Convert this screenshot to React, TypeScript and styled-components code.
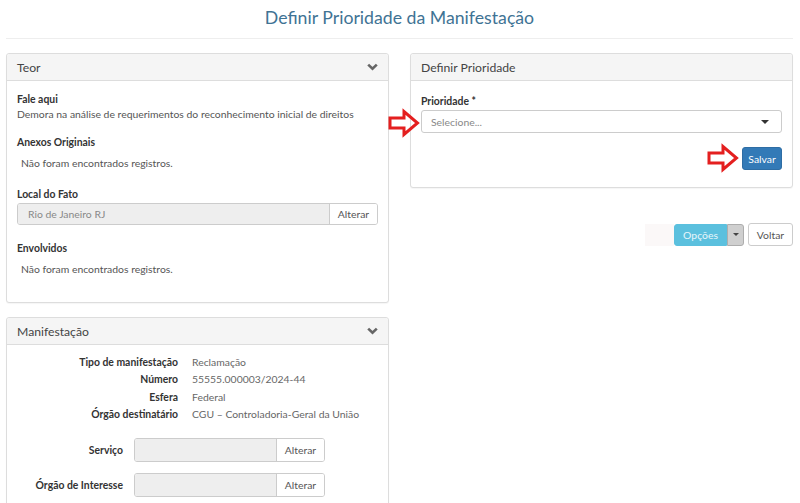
import React from "react";
import styled, { createGlobalStyle } from "styled-components";

const GlobalStyle = createGlobalStyle`
  body {
    margin: 0;
    background: #ffffff;
    font-family: Lato, "Open Sans", "Liberation Sans", sans-serif;
    font-size: 10.4px;
    color: #555;
  }
`;

const Page = styled.div`
  width: 800px;
  height: 503px;
  overflow: hidden;
  padding: 0 7px 0 6px;
  box-sizing: border-box;
`;

const TitleBar = styled.div`
  height: 39px;
  border-bottom: 1px solid #eeeeee;
  display: flex;
  align-items: center;
  justify-content: center;
  padding-bottom: 4px;
  box-sizing: border-box;
`;

const Title = styled.h1`
  margin: 0;
  font-size: 17.7px;
  font-weight: 400;
  color: #3f7394;
`;

const Columns = styled.div`
  display: grid;
  grid-template-columns: 383px 383px;
  column-gap: 21px;
  margin-top: 14px;
  align-items: start;
`;

const Column = styled.div`
  display: flex;
  flex-direction: column;
  gap: 14px;
`;

const Panel = styled.section`
  border: 1px solid #dddddd;
  border-radius: 3px;
  background: #fff;
  box-shadow: 0 1px 1px rgba(0, 0, 0, 0.04);
`;

const PanelHeader = styled.header`
  height: 26px;
  background: #f5f5f5;
  border-bottom: 1px solid #dddddd;
  border-radius: 3px 3px 0 0;
  display: flex;
  align-items: center;
  justify-content: space-between;
  padding: 0 10px;
  font-size: 12.2px;
  color: #444;
`;

const PanelBody = styled.div<{ $pad?: string }>`
  padding: ${(p) => p.$pad || "10px"};
  position: relative;
`;

const Label = styled.div<{ $mt?: number }>`
  font-weight: 700;
  color: #333;
  line-height: 15px;
  margin-top: ${(p) => p.$mt || 0}px;
`;

const Text = styled.div`
  line-height: 15px;
  color: #555;
`;

const Empty = styled.div<{ $mt?: number }>`
  padding-left: 4px;
  line-height: 15px;
  margin-top: ${(p) => p.$mt || 0}px;
`;

const InputGroup = styled.div<{ $w?: number; $h?: number; $mt?: number }>`
  display: flex;
  width: ${(p) => (p.$w ? `${p.$w}px` : "100%")};
  height: ${(p) => p.$h || 22}px;
  margin-top: ${(p) => p.$mt || 0}px;
  border: 1px solid #cccccc;
  border-radius: 3px;
  box-sizing: border-box;
  overflow: hidden;
`;

const ReadOnlyInput = styled.div`
  flex: 1;
  background: #eeeeee;
  color: #888;
  display: flex;
  align-items: center;
  padding: 0 10px;
`;

const Addon = styled.div`
  width: 47px;
  background: #fff;
  border-left: 1px solid #cccccc;
  display: flex;
  align-items: center;
  justify-content: center;
  color: #555;
`;

const Chevron = () => (
  <svg width="11" height="8" viewBox="0 0 11 8">
    <path d="M1.2 1.6 L5.5 5.8 L9.8 1.6" fill="none" stroke="#666" strokeWidth="2.6" />
  </svg>
);

const DefList = styled.div`
  display: grid;
  grid-template-columns: 161px 1fr;
  column-gap: 14px;
  row-gap: 2.2px;
  line-height: 15.3px;
`;

const DefTerm = styled.div`
  text-align: right;
  font-weight: 700;
  color: #333;
`;

const DefValue = styled.div`
  color: #666;
`;

const FormRow = styled.div<{ $mt?: number }>`
  display: grid;
  grid-template-columns: 106px 191px;
  column-gap: 11px;
  align-items: center;
  margin-top: ${(p) => p.$mt || 0}px;
`;

const FormLabel = styled.div`
  text-align: right;
  font-weight: 700;
  color: #333;
`;

const Select = styled.div`
  height: 23px;
  margin-top: 1px;
  border: 1px solid #cccccc;
  border-radius: 3px;
  box-sizing: border-box;
  display: flex;
  align-items: center;
  justify-content: space-between;
  padding: 0 12px 0 9px;
  color: #888;
`;

const Caret = styled.span<{ $color?: string; $size?: number }>`
  width: 0;
  height: 0;
  border-left: ${(p) => p.$size || 4}px solid transparent;
  border-right: ${(p) => p.$size || 4}px solid transparent;
  border-top: ${(p) => p.$size || 4}px solid ${(p) => p.$color || "#333"};
`;

const Actions = styled.div`
  display: flex;
  justify-content: flex-end;
  margin-top: 14px;
`;

const Button = styled.button<{ $variant: "primary" | "info" | "caret" | "default" | "ghost" }>`
  font-family: inherit;
  font-size: 10.4px;
  height: 22px;
  padding: 0 8px;
  border-radius: ${(p) => (p.$variant === "info" ? "3px 0 0 3px" : p.$variant === "caret" ? "0 3px 3px 0" : "3px")};
  border: 1px solid
    ${(p) =>
      p.$variant === "primary"
        ? "#2e6da4"
        : p.$variant === "info"
        ? "#5bc0de"
        : p.$variant === "caret"
        ? "#adadad"
        : p.$variant === "ghost"
        ? "transparent"
        : "#cccccc"};
  background: ${(p) =>
    p.$variant === "primary"
      ? "#337ab7"
      : p.$variant === "info"
      ? "#5bc0de"
      : p.$variant === "caret"
      ? "#cfcfcf"
      : p.$variant === "ghost"
      ? "#fbf8f8"
      : "#fff"};
  color: ${(p) => (p.$variant === "default" ? "#555" : p.$variant === "info" ? "#e8f6fb" : "#fff")};
  display: flex;
  align-items: center;
  justify-content: center;
  ${(p) => p.$variant === "primary" && "height: 23px; width: 40px; padding: 0;"}
  ${(p) => p.$variant === "info" && "width: 53px;"}
  ${(p) => p.$variant === "caret" && "width: 17px; padding: 0;"}
  ${(p) => p.$variant === "ghost" && "width: 29px; border-radius: 0;"}
  ${(p) => p.$variant === "default" && "width: 45px; height: 23px; margin-left: 4px;"}
`;

const Toolbar = styled.div`
  display: flex;
  justify-content: flex-end;
  align-items: center;
  margin-top: 21px;
`;

const FieldWrap = styled.div`
  position: relative;
`;

const Pointer = styled.svg<{ $left: number; $top: number }>`
  position: absolute;
  left: ${(p) => p.$left}px;
  top: ${(p) => p.$top}px;
  overflow: visible;
`;

const RedArrow = ({ left, top }: { left: number; top: number }) => (
  <Pointer $left={left} $top={top} width="32" height="28" viewBox="0 0 32 28">
    <path
      d="M2 9 H16 V2.5 L29.5 14 L16 25.5 V19 H2 Z"
      fill="none"
      stroke="#e41f1f"
      strokeWidth="3"
      strokeLinejoin="miter"
    />
  </Pointer>
);

export default function App() {
  return (
    <Page>
      <GlobalStyle />
      <TitleBar>
        <Title>Definir Prioridade da Manifestação</Title>
      </TitleBar>
      <Columns>
        <Column>
          <Panel>
            <PanelHeader>
              <span>Teor</span>
              <Chevron />
            </PanelHeader>
            <PanelBody $pad="11px 10px 25px">
              <Label>Fale aqui</Label>
              <Text>Demora na análise de requerimentos do reconhecimento inicial de direitos</Text>
              <Label $mt={13}>Anexos Originais</Label>
              <Empty $mt={6}>Não foram encontrados registros.</Empty>
              <Label $mt={16}>Local do Fato</Label>
              <InputGroup $mt={1}>
                <ReadOnlyInput>Rio de Janeiro RJ</ReadOnlyInput>
                <Addon>Alterar</Addon>
              </InputGroup>
              <Label $mt={16}>Envolvidos</Label>
              <Empty $mt={6}>Não foram encontrados registros.</Empty>
            </PanelBody>
          </Panel>
          <Panel>
            <PanelHeader>
              <span>Manifestação</span>
              <Chevron />
            </PanelHeader>
            <PanelBody $pad="10px 10px 20px">
              <DefList>
                <DefTerm>Tipo de manifestação</DefTerm>
                <DefValue>Reclamação</DefValue>
                <DefTerm>Número</DefTerm>
                <DefValue>55555.000003/2024-44</DefValue>
                <DefTerm>Esfera</DefTerm>
                <DefValue>Federal</DefValue>
                <DefTerm>Órgão destinatário</DefTerm>
                <DefValue>CGU – Controladoria-Geral da União</DefValue>
              </DefList>
              <FormRow $mt={15}>
                <FormLabel>Serviço</FormLabel>
                <InputGroup $h={24}>
                  <ReadOnlyInput />
                  <Addon>Alterar</Addon>
                </InputGroup>
              </FormRow>
              <FormRow $mt={11}>
                <FormLabel>Órgão de Interesse</FormLabel>
                <InputGroup $h={24}>
                  <ReadOnlyInput />
                  <Addon>Alterar</Addon>
                </InputGroup>
              </FormRow>
            </PanelBody>
          </Panel>
        </Column>
        <Column>
          <Panel>
            <PanelHeader>
              <span>Definir Prioridade</span>
            </PanelHeader>
            <PanelBody $pad="13px 10px 17px">
              <Label>Prioridade *</Label>
              <FieldWrap>
                <Select>
                  <span>Selecione...</span>
                  <Caret $color="#333" $size={4} />
                </Select>
                <RedArrow left={-33} top={-1} />
              </FieldWrap>
              <Actions>
                <FieldWrap>
                  <RedArrow left={-35} top={-3} />
                  <Button $variant="primary">Salvar</Button>
                </FieldWrap>
              </Actions>
            </PanelBody>
          </Panel>
          <Toolbar>
            <Button $variant="ghost" />
            <Button $variant="info">Opções</Button>
            <Button $variant="caret">
              <Caret $color="#444" $size={3} />
            </Button>
            <Button $variant="default">Voltar</Button>
          </Toolbar>
        </Column>
      </Columns>
    </Page>
  );
}
